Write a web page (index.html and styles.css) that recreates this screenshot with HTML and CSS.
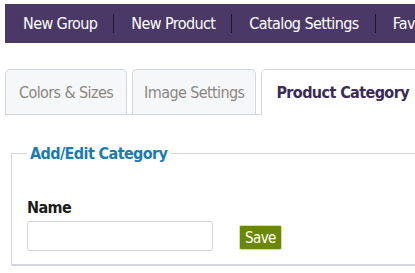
FILE: index.html
```html
<!DOCTYPE html>
<html lang="en">
<head>
    <meta charset="UTF-8">
    <title>Catalog</title>
    <link rel="stylesheet" href="styles.css">
</head>
<body>
<div class="page">
    <ul class="topNav">
        <li><a href="#">New Group</a></li>
        <li><a href="#">New Product</a></li>
        <li><a href="#">Catalog Settings</a></li>
        <li><a href="#">Favorites</a></li>
    </ul>
    <ul class="tabs">
        <li class="tab">Colors &amp; Sizes</li>
        <li class="tab">Image Settings</li>
        <li class="tab active">Product Category</li>
    </ul>
    <fieldset class="catBox">
        <legend>Add/Edit Category</legend>
        <label for="catName">Name</label>
        <div class="row">
            <input type="text" id="catName">
            <button type="button" class="btnSave">Save</button>
        </div>
    </fieldset>
</div>
</body>
</html>
```

FILE: styles.css
```css
html, body {
    margin: 0;
    overflow: hidden;
}

body {
    font-family: "DejaVu Sans Condensed", "Liberation Sans Narrow", "Liberation Sans", sans-serif;
    letter-spacing: -0.6px;
    background-color: white;
}

.page {
    padding: 4px 0 0 5px;
    width: 600px;
}

.topNav {
    list-style: none;
    margin: 0;
    padding: 0 0 0 1px;
    height: 39px;
    display: flex;
    align-items: center;
    background-color: #4a3866;
    white-space: nowrap;
}

.topNav li {
    display: flex;
    align-items: center;
}

.topNav li + li::before {
    content: "";
    width: 1px;
    height: 19px;
    background-color: #1e1426;
}

.topNav a {
    color: white;
    text-decoration: none;
    font-size: 16px;
    padding: 0 16px 0 17px;
}

.tabs {
    list-style: none;
    margin: 26px 0 0 0;
    padding: 0;
    display: flex;
    gap: 5px;
    border-bottom: 1px solid #d3d7dd;
    height: 45px;
    width: 700px;
}

.tab {
    height: 45px;
    box-sizing: border-box;
    padding: 0 13px;
    display: flex;
    align-items: center;
    font-size: 16px;
    color: #8b8682;
    background-color: #f6f7f9;
    border: 1px solid #d3d7dd;
    border-bottom: none;
    border-radius: 5px 5px 0 0;
}

.tab + .tab {
    padding: 0 11px;
}

.tab.active {
    height: 46px;
    background-color: white;
    color: #3a2b57;
    font-weight: bold;
    padding: 0 14px;
}

.catBox {
    margin: 29px 0 0 6px;
    padding: 35px 15px 13px 15px;
    border: 1px solid #d3d7dd;
    border-bottom-width: 2px;
    width: 700px;
}

.catBox legend {
    margin-left: 0;
    padding: 0 3px;
    font-size: 16px;
    font-weight: bold;
    color: #1b7cb1;
}

.catBox label {
    display: block;
    font-size: 16px;
    line-height: 20px;
    font-weight: bold;
    color: #1c1c1c;
    margin-bottom: 3px;
}

.row {
    display: flex;
    align-items: flex-start;
    gap: 26px;
}

.row input {
    width: 186px;
    height: 30px;
    box-sizing: border-box;
    border: 1px solid #d3d7dd;
    border-radius: 3px;
    outline: none;
}

.btnSave {
    margin-top: 4px;
    background-color: #6b8900;
    color: white;
    font-family: inherit;
    letter-spacing: -0.6px;
    font-size: 15px;
    border: 1px solid #d3d7dd;
    border-radius: 2px;
    padding: 0 5px;
    height: 25px;
}
```
